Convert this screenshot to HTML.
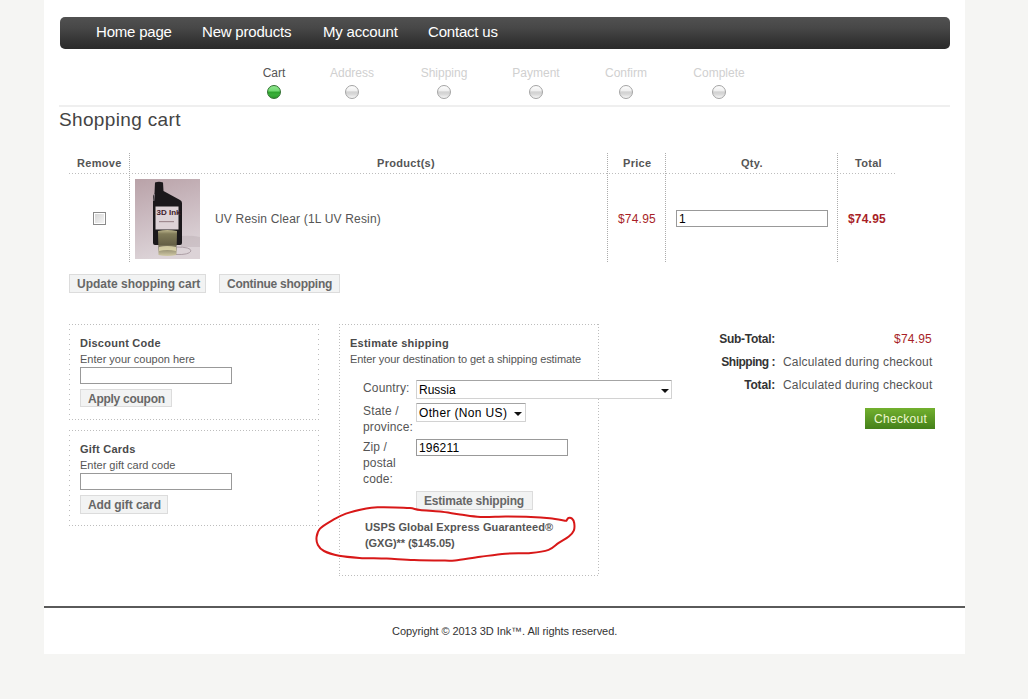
<!DOCTYPE html>
<html><head><meta charset="utf-8">
<style>
*{margin:0;padding:0;box-sizing:border-box}
html,body{width:1028px;height:699px;overflow:hidden;background:#f5f5f3;font-family:"Liberation Sans",sans-serif}
.a{position:absolute;white-space:nowrap;line-height:1}
#page{position:absolute;left:44px;top:0;width:921px;height:654px;background:#fff}
#nav{position:absolute;left:60px;top:17px;width:890px;height:32px;border-radius:5px;background:linear-gradient(#515151,#474747 35%,#343434 75%,#2a2a2a)}
.nv{color:#fff;font-size:15px;letter-spacing:-0.2px}
.st{font-size:12px;color:#d0d0d0;transform:translateX(-50%)}
.dot{position:absolute;width:14px;height:14px;border-radius:50%;top:85px;border:1px solid #a4a4a4;background:linear-gradient(#fdfdfd 0%,#f0f0f0 38%,#d2d2d2 50%,#d8d8d8 68%,#f6f6f6 100%)}
.dot.g{border-color:#2f6f2f;background:linear-gradient(#8ee68e 0%,#72da72 40%,#2ea42e 52%,#3aae3a 75%,#2a962a 100%)}
.th{font-size:11px;font-weight:bold;color:#555;letter-spacing:0.3px}
.hd{position:absolute;height:1px;background:repeating-linear-gradient(90deg,#bdbdbd 0 1px,transparent 1px 3px)}
.vd{position:absolute;width:1px;background:repeating-linear-gradient(180deg,#acacac 0 1px,transparent 1px 2px)}
.btn{position:absolute;background:#f2f3f3;border:1px solid #dcdcdc;color:#676767;font-size:12px;font-weight:bold;line-height:1}
.btn span{position:absolute;white-space:nowrap}
.inp{position:absolute;border:1px solid #999;background:#fff}
.sel{position:absolute;border:1px solid #d2d2d2;border-top-color:#a4a4a4;border-radius:1px;background:#fff}
.arr{position:absolute;width:0;height:0;border-left:4px solid transparent;border-right:4px solid transparent;border-top:4px solid #111}
.box{position:absolute}
.box .bt,.box .bb{position:absolute;left:0;right:0;height:1px;background:repeating-linear-gradient(90deg,#bdbdbd 0 1px,transparent 1px 3px)}
.box .bl,.box .br{position:absolute;top:0;bottom:0;width:1px;background:repeating-linear-gradient(180deg,#bdbdbd 0 1px,transparent 1px 3px)}
.box.b5 .bl,.box.b5 .br{background:repeating-linear-gradient(180deg,#bdbdbd 0 1px,transparent 1px 5px)}
.bt{top:0}.bb{bottom:0}.bl{left:0}.br{right:0}
.bh{font-size:11px;font-weight:bold;color:#4a4a4a;letter-spacing:0.25px}
.bs{font-size:11px;color:#555}
.lb{font-size:12px;color:#555;letter-spacing:0.15px}
.red{color:#a81f27;letter-spacing:0.2px}
</style></head><body>
<div id="page"></div>
<div id="nav"></div>
<div class="a nv" style="left:96px;top:24px">Home page</div>
<div class="a nv" style="left:202px;top:24px">New products</div>
<div class="a nv" style="left:323px;top:24px">My account</div>
<div class="a nv" style="left:428px;top:24px">Contact us</div>

<div class="a st" style="left:274px;top:67px;color:#555">Cart</div>
<div class="a st" style="left:352px;top:67px">Address</div>
<div class="a st" style="left:444px;top:67px">Shipping</div>
<div class="a st" style="left:536px;top:67px">Payment</div>
<div class="a st" style="left:626px;top:67px">Confirm</div>
<div class="a st" style="left:719px;top:67px">Complete</div>
<div class="dot g" style="left:267px"></div>
<div class="dot" style="left:345px"></div>
<div class="dot" style="left:437px"></div>
<div class="dot" style="left:529px"></div>
<div class="dot" style="left:619px"></div>
<div class="dot" style="left:712px"></div>
<div style="position:absolute;left:59px;top:105px;width:891px;height:2px;background:#efefef"></div>

<div class="a" style="left:59px;top:110px;font-size:19px;letter-spacing:0.35px;color:#444">Shopping cart</div>

<!-- table -->
<div class="a th" style="left:77px;top:158px">Remove</div>
<div class="a th" style="left:377px;top:158px">Product(s)</div>
<div class="a th" style="left:623px;top:158px">Price</div>
<div class="a th" style="left:741px;top:158px">Qty.</div>
<div class="a th" style="left:855px;top:158px">Total</div>
<div class="hd" style="left:69px;top:173px;width:827px"></div>
<div class="vd" style="left:129px;top:153px;height:110px"></div>
<div class="vd" style="left:607px;top:153px;height:110px"></div>
<div class="vd" style="left:665px;top:153px;height:110px"></div>
<div class="vd" style="left:837px;top:153px;height:110px"></div>

<!-- checkbox -->
<div style="position:absolute;left:93px;top:212px;width:13px;height:13px;border:1px solid #8a8a8a;background:#fff">
  <div style="position:absolute;left:1px;top:1px;width:9px;height:9px;background:linear-gradient(135deg,#d6d6d6,#f4f4f4)"></div>
</div>

<!-- product image -->
<svg style="position:absolute;left:135px;top:179px" width="65" height="80" viewBox="0 0 65 80">
  <defs>
    <linearGradient id="bg" x1="0" y1="0" x2="0.25" y2="1"><stop offset="0" stop-color="#b9a2a8"/><stop offset="0.45" stop-color="#c9b8be"/><stop offset="1" stop-color="#dcd3d7"/></linearGradient>
    <linearGradient id="liq" x1="0" y1="0" x2="0" y2="1"><stop offset="0" stop-color="#cfc79a"/><stop offset="0.15" stop-color="#8c8660"/><stop offset="0.6" stop-color="#6a6448"/><stop offset="1" stop-color="#cfc8a0"/></linearGradient>
  </defs>
  <rect width="65" height="80" fill="url(#bg)"/>
  <path d="M46 57 Q56 56 65 58 L65 68 L46 68z" fill="#b3a3aa" opacity="0.35"/>
  <path d="M20 3.5 Q24 2 28 3.5 L28.5 12 L45 21 Q47 22 47 24 L47 64 Q47 66 45 66 L20 66 Q18 66 18 64 L18 18 Q18 16 19.5 14.5 Z" fill="#1b181b"/>
  <path d="M19.5 15 L18.8 22" stroke="#8a8088" stroke-width="1"/>
  <rect x="20.5" y="27.5" width="23" height="23" fill="#ddd2d6"/>
  <text x="21.5" y="35.5" font-family="Liberation Sans" font-weight="bold" font-size="8" fill="#40202a">3D Ink</text>
  <rect x="24" y="42" width="15" height="1.2" fill="#a08a90"/>
  <path d="M23 52 Q32 50 42 52 L41.5 76 Q32 78 23.5 76 Z" fill="url(#liq)" opacity="0.9"/>
  <path d="M24 68 Q32 66 41 68 L41 72 Q32 70 24 72Z" fill="#e4dcb0" opacity="0.8"/>
  <path d="M41 68 Q56 68 56 72 Q54 76 41 75.5" fill="none" stroke="#a89aa0" stroke-width="0.9"/>
</svg>
<div class="a" style="left:215px;top:213px;font-size:12px;letter-spacing:0.18px;color:#555">UV Resin Clear (1L UV Resin)</div>
<div class="a red" style="left:618px;top:213px;font-size:12px">$74.95</div>
<div class="inp" style="left:676px;top:210px;width:152px;height:17px"></div>
<div class="a" style="left:679px;top:213px;font-size:12px;color:#000">1</div>
<div class="a red" style="left:848px;top:213px;font-size:12px;font-weight:bold">$74.95</div>

<div class="btn" style="left:69px;top:274px;width:137px;height:19px"><span style="left:7px;top:3px">Update shopping cart</span></div>
<div class="btn" style="left:219px;top:274px;width:121px;height:19px"><span style="left:7px;top:3px;letter-spacing:-0.25px">Continue shopping</span></div>

<!-- discount box -->
<div class="box b5" style="left:69px;top:324px;width:250px;height:96px"><div class="bt"></div><div class="bb"></div><div class="bl"></div><div class="br"></div></div>
<div class="a bh" style="left:80px;top:338px">Discount Code</div>
<div class="a bs" style="left:80px;top:354px">Enter your coupon here</div>
<div class="inp" style="left:80px;top:367px;width:152px;height:17px"></div>
<div class="btn" style="left:80px;top:389px;width:92px;height:18px"><span style="left:7px;top:3px;letter-spacing:-0.27px">Apply coupon</span></div>

<!-- gift box -->
<div class="box b5" style="left:69px;top:430px;width:250px;height:96px"><div class="bt"></div><div class="bb"></div><div class="bl"></div><div class="br"></div></div>
<div class="a bh" style="left:80px;top:444px">Gift Cards</div>
<div class="a bs" style="left:80px;top:460px">Enter gift card code</div>
<div class="inp" style="left:80px;top:473px;width:152px;height:17px"></div>
<div class="btn" style="left:80px;top:495px;width:88px;height:19px"><span style="left:7px;top:3px;letter-spacing:-0.08px">Add gift card</span></div>

<!-- estimate box -->
<div class="box" style="left:339px;top:324px;width:260px;height:252px"><div class="bt"></div><div class="bb"></div><div class="bl"></div><div class="br"></div></div>
<div class="a bh" style="left:350px;top:338px">Estimate shipping</div>
<div class="a bs" style="left:350px;top:354px;letter-spacing:-0.09px">Enter your destination to get a shipping estimate</div>
<div class="a lb" style="left:363px;top:382px">Country:</div>
<div class="sel" style="left:416px;top:380px;width:256px;height:19px"></div>
<div class="a" style="left:419px;top:384px;font-size:12px;color:#000">Russia</div>
<div class="arr" style="left:661px;top:389px"></div>
<div class="a lb" style="left:363px;top:403px;line-height:16px">State /<br>province:</div>
<div class="sel" style="left:416px;top:403px;width:110px;height:19px"></div>
<div class="a" style="left:419px;top:407px;font-size:12px;letter-spacing:0.35px;color:#000">Other (Non US)</div>
<div class="arr" style="left:514px;top:412px"></div>
<div class="a lb" style="left:363px;top:439px;line-height:16px">Zip /<br>postal<br>code:</div>
<div class="inp" style="left:416px;top:439px;width:152px;height:17px"></div>
<div class="a" style="left:419px;top:442px;font-size:12px;letter-spacing:0.2px;color:#000">196211</div>
<div class="btn" style="left:416px;top:491px;width:117px;height:19px"><span style="left:7px;top:3px;letter-spacing:-0.2px">Estimate shipping</span></div>
<div class="a bh" style="left:365px;top:522px;color:#555;letter-spacing:0.09px">USPS Global Express Guaranteed®</div>
<div class="a bh" style="left:365px;top:538px;color:#555;letter-spacing:-0.05px">(GXG)** ($145.05)</div>

<!-- totals -->
<div class="a" style="left:695px;top:333px;width:80px;text-align:right;font-size:12px;font-weight:bold;letter-spacing:-0.27px;color:#333">Sub-Total:</div>
<div class="a red" style="left:880px;top:333px;width:52px;text-align:right;font-size:12px">$74.95</div>
<div class="a" style="left:695px;top:356px;width:80px;text-align:right;font-size:12px;font-weight:bold;letter-spacing:-0.5px;color:#333">Shipping :</div>
<div class="a" style="left:783px;top:356px;font-size:12px;letter-spacing:0.18px;color:#555">Calculated during checkout</div>
<div class="a" style="left:695px;top:379px;width:80px;text-align:right;font-size:12px;font-weight:bold;letter-spacing:-0.15px;color:#333">Total:</div>
<div class="a" style="left:783px;top:379px;font-size:12px;letter-spacing:0.18px;color:#555">Calculated during checkout</div>
<div style="position:absolute;left:865px;top:408px;width:70px;height:21px;background:linear-gradient(#72b02e,#44801a)"></div>
<div class="a" style="left:874px;top:413px;font-size:12px;color:#eef8cf;letter-spacing:0.3px">Checkout</div>

<!-- ellipse -->
<svg style="position:absolute;left:0;top:0" width="1028" height="699">
<path d="M566.3 520.8 C563.5 520.4 555.7 518.9 549.8 518.3 C543.9 517.7 538.3 517.3 530.9 517.0 C523.5 516.7 514.0 516.6 505.6 516.6 C497.2 516.6 487.9 517.4 480.3 517.0 C472.7 516.6 466.7 515.4 460.0 514.5 C453.3 513.6 446.7 512.2 440.0 511.5 C433.3 510.8 425.0 510.6 420.0 510.0 C415.0 509.4 414.2 508.5 410.0 508.1 C405.8 507.7 400.0 507.5 395.0 507.4 C390.0 507.2 384.8 507.0 380.0 507.2 C375.2 507.4 372.0 507.3 366.3 508.4 C360.6 509.5 351.6 511.6 345.9 513.6 C340.2 515.6 336.5 517.9 332.2 520.4 C327.9 522.9 322.6 525.9 320.0 528.6 C317.4 531.3 317.0 534.1 316.6 536.8 C316.2 539.5 316.7 542.6 317.9 545.0 C319.1 547.4 320.5 549.2 324.0 551.0 C327.5 552.8 333.1 554.6 339.0 555.8 C344.9 556.9 351.6 557.4 359.5 557.9 C367.4 558.4 377.6 558.2 386.7 558.6 C395.8 559.0 404.3 559.7 414.0 560.0 C423.7 560.3 438.2 560.5 445.0 560.6 C451.8 560.7 449.1 561.0 455.0 560.4 C460.9 559.8 471.9 557.9 480.3 556.8 C488.7 555.7 497.2 554.3 505.6 553.7 C514.0 553.1 523.7 553.6 530.9 553.0 C538.1 552.4 544.0 551.6 548.6 549.9 C553.2 548.2 555.3 545.1 558.7 542.9 C562.1 540.7 566.3 538.7 568.8 536.6 C571.3 534.5 573.0 532.6 573.9 530.3 C574.8 528.0 574.5 525.0 574.2 523.0 C573.9 521.0 573.0 519.4 572.0 518.6 C571.0 517.8 569.5 517.6 568.5 518.0 C567.5 518.4 566.7 520.3 566.3 520.8" fill="none" stroke="#d81818" stroke-width="2" stroke-linecap="round" stroke-linejoin="round"/>
</svg>

<!-- footer -->
<div style="position:absolute;left:44px;top:606px;width:921px;height:2px;background:#5a5a5a"></div>
<div class="a" style="left:392px;top:626px;font-size:11px;letter-spacing:-0.065px;color:#333">Copyright © 2013 3D Ink™. All rights reserved.</div>
</body></html>
